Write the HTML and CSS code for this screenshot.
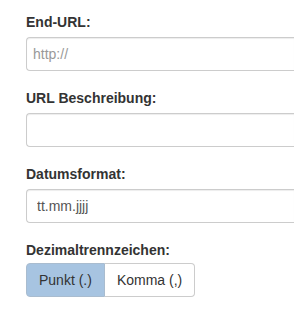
FILE: index.html
```html
<!DOCTYPE html>
<html lang="de">
<head>
  <meta charset="UTF-8" />
  <meta name="viewport" content="width=device-width, initial-scale=1.0"/>
  <title>Einstellungen</title>
  <link rel="stylesheet" href="styles.css">
</head>
<body>
  <form class="settings">
    <div class="form-group">
      <label for="end-url">End-URL:</label>
      <input type="text" id="end-url" class="form-control" placeholder="http://">
    </div>

    <div class="form-group">
      <label for="url-desc">URL Beschreibung:</label>
      <input type="text" id="url-desc" class="form-control">
    </div>

    <div class="form-group">
      <label for="date-format">Datumsformat:</label>
      <input type="text" id="date-format" class="form-control date" placeholder="tt.mm.jjjj">
    </div>

    <div class="form-group last">
      <label>Dezimaltrennzeichen:</label>
      <div class="btn-group">
        <button type="button" class="btn active">Punkt (.)</button>
        <button type="button" class="btn">Komma (,)</button>
      </div>
    </div>
  </form>
</body>
</html>
```

FILE: styles.css
```css
* {
  margin: 0; padding: 0; box-sizing: border-box;
}

body {
  font-family: "Liberation Sans", Arial, sans-serif;
  font-size: 14px;
  line-height: 20px;
  color: #333;
  background: #fff;
  overflow: hidden;
}

.settings {
  width: 100%;
  padding: 12px 0 0 26px;
}

.form-group {
  margin-bottom: 17px;
}

.form-group label {
  display: block;
  font-weight: bold;
  margin-bottom: 5px;
}

.form-group.last label {
  margin-bottom: 3px;
}

/* field is cut by the window edge, so no right border */
.form-control {
  display: block;
  width: 100%;
  height: 34px;
  padding: 6px 6px;
  font-family: inherit;
  font-size: 14px;
  color: #555;
  border: 1px solid #ccc;
  border-right: none;
  border-radius: 4px 0 0 4px;
  box-shadow: inset 0 1px 1px rgba(0, 0, 0, 0.075);
  outline: none;
}

.form-control.date {
  padding-left: 10px;
}

.form-control::placeholder {
  color: #999;
}

.form-control.date::placeholder {
  color: #555;
}

.btn-group {
  display: flex;
}

.btn {
  height: 34px;
  padding: 6px 12px;
  font-family: inherit;
  font-size: 14px;
  line-height: 20px;
  color: #333;
  background: #fff;
  border: 1px solid #ccc;
  cursor: pointer;
}

.btn:first-child {
  border-radius: 4px 0 0 4px;
}

.btn:last-child {
  border-left: none;
  border-radius: 0 4px 4px 0;
}

.btn.active {
  background: #a7c4e1;
  border-color: #a9bccf;
}
```
